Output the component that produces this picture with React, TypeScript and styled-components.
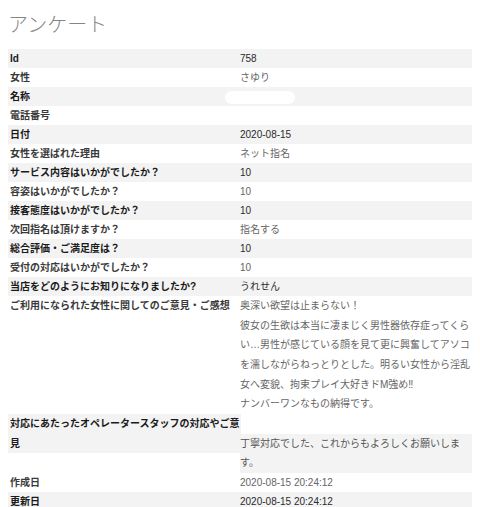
import React from "react";
import styled, { createGlobalStyle } from "styled-components";

const Global = createGlobalStyle`
  html, body { background: #fff; }
  body {
    margin: 8px;
    font-family: "Liberation Sans", "Noto Sans CJK JP", sans-serif;
    font-size: 10px;
    color: #333;
  }
`;

const Page = styled.div`
  width: 465px;
`;

const Title = styled.h1`
  margin: 2px 0 11px 0;
  font-size: 20px;
  line-height: 28px;
  font-weight: 300;
  color: #858585;
  font-family: "Noto Sans CJK JP", sans-serif;
`;

const Table = styled.div`
  display: flex;
  flex-direction: column;
`;

const Row = styled.div<{ $shade?: boolean }>`
  display: grid;
  grid-template-columns: 232px 1fr;
  background: ${(p) => (p.$shade ? "#f3f3f3" : "#fff")};
  line-height: 19px;
`;

const Label = styled.div<{ $shade?: boolean }>`
  padding-left: 2px;
  font-weight: 700;
  color: ${(p) => (p.$shade ? "#1a1a1a" : "#3a3a3a")};
  white-space: nowrap;
`;

const Value = styled.div<{ $shade?: boolean; $lh?: number }>`
  color: ${(p) => (p.$shade ? "#2a2a2a" : "#666")};
  line-height: ${(p) => (p.$lh ? `${p.$lh}px` : "19px")};
  padding-right: 1px;
`;

const StaggerRow = styled.div`
  display: grid;
  grid-template-columns: 233px 1fr;
  align-items: start;
`;

const StaggerLabel = styled.div`
  padding-left: 2px;
  font-weight: 700;
  color: #1a1a1a;
  background: #f3f3f3;
  line-height: 19.5px;
`;

const StaggerValue = styled.div`
  margin-top: 19.5px;
  margin-left: -1px;
  background: #f3f3f3;
  color: #555;
  line-height: 19.5px;
`;

const Redacted = styled.span`
  display: inline-block;
  vertical-align: middle;
  margin-left: -15px;
  width: 70px;
  height: 13px;
  border-radius: 7px;
  background: #fff;
`;

type Item = { label: string; value: React.ReactNode; lh?: number };

const items: Item[] = [
  { label: "Id", value: "758" },
  { label: "女性", value: "さゆり" },
  { label: "名称", value: <Redacted /> },
  { label: "電話番号", value: "" },
  { label: "日付", value: "2020-08-15" },
  { label: "女性を選ばれた理由", value: "ネット指名" },
  { label: "サービス内容はいかがでしたか？", value: "10" },
  { label: "容姿はいかがでしたか？", value: "10" },
  { label: "接客態度はいかがでしたか？", value: "10" },
  { label: "次回指名は頂けますか？", value: "指名する" },
  { label: "総合評価・ご満足度は？", value: "10" },
  { label: "受付の対応はいかがでしたか？", value: "10" },
  { label: "当店をどのようにお知りになりましたか?", value: "うれせん" },
  {
    label: "ご利用になられた女性に関してのご意見・ご感想",
    lh: 19.67,
    value: (
      <>
        奥深い欲望は止まらない！
        <br />
        彼女の生欲は本当に凄まじく男性器依存症ってくらい…男性が感じている顔を見て更に興奮してアソコを濡しながらねっとりとした。明るい女性から淫乱女へ変貌、拘束プレイ大好きドM強め‼
        <br />
        ナンバーワンなもの納得です。
      </>
    ),
  },
];

const tail: Item[] = [
  { label: "作成日", value: "2020-08-15 20:24:12" },
  { label: "更新日", value: "2020-08-15 20:24:12" },
];

export default function App() {
  return (
    <Page>
      <Global />
      <Title>アンケート</Title>
      <Table>
        {items.map((it, i) => {
          const shade = i % 2 === 0;
          return (
            <Row key={it.label} $shade={shade}>
              <Label $shade={shade}>{it.label}</Label>
              <Value $shade={shade} $lh={it.lh}>
                {it.value}
              </Value>
            </Row>
          );
        })}
        <StaggerRow>
          <StaggerLabel>対応にあたったオペレータースタッフの対応やご意見</StaggerLabel>
          <StaggerValue>丁寧対応でした、これからもよろしくお願いします。</StaggerValue>
        </StaggerRow>
        {tail.map((it, i) => {
          const shade = i % 2 === 1;
          return (
            <Row key={it.label} $shade={shade}>
              <Label $shade={shade}>{it.label}</Label>
              <Value $shade={shade}>{it.value}</Value>
            </Row>
          );
        })}
      </Table>
    </Page>
  );
}
